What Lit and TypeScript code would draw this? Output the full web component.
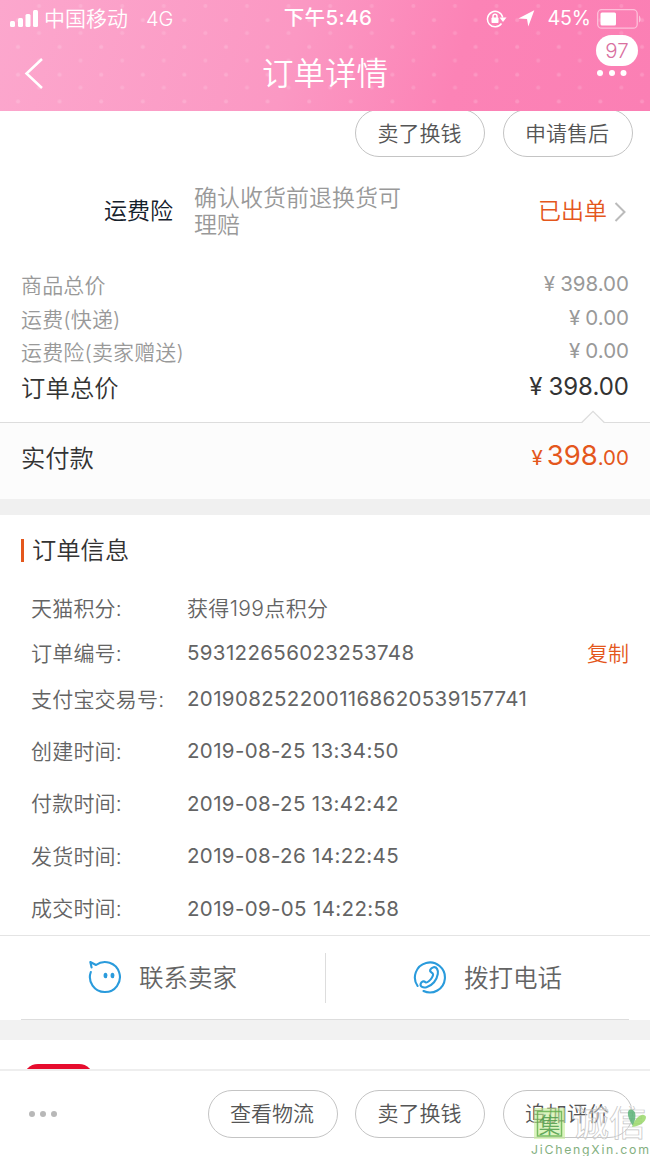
import { LitElement, html, css } from "lit";
import { customElement } from "lit/decorators.js";

const fees = [
  ["商品总价", "398.00"],
  ["运费(快递)", "0.00"],
  ["运费险(卖家赠送)", "0.00"],
];

const info = [
  ["天猫积分:", "获得199点积分", "pts"],
  ["订单编号:", "593122656023253748", "num"],
  ["支付宝交易号:", "2019082522001168620539157741", "trade"],
  ["创建时间:", "2019-08-25 13:34:50", "date"],
  ["付款时间:", "2019-08-25 13:42:42", "date"],
  ["发货时间:", "2019-08-26 14:22:45", "date"],
  ["成交时间:", "2019-09-05 14:22:58", "date"],
];

@customElement("app-root")
export class AppRoot extends LitElement {
  static styles = css`
    :host {
      display: flex;
      flex-direction: column;
      position: relative;
      width: 650px;
      height: 1156px;
      overflow: hidden;
      background: #fff;
      color: #646464;
      font-family: Inter, "Noto Sans CJK SC", sans-serif;
      font-weight: 350;
      font-size: 21px;
      line-height: 1;
      white-space: nowrap;
    }
    * { box-sizing: border-box; }
    svg { display: block; flex: none; }
    .head {
      position: relative;
      flex: none;
      height: 111px;
      color: #fff;
      background: linear-gradient(105deg, #fca7cd 0%, #fb98c3 45%, #fc83b6 70%, #fb7fb4 100%);
    }
    .pattern { position: absolute; inset: 0; }
    .status {
      position: relative;
      display: grid;
      grid-template-columns: 1fr auto 1fr;
      align-items: center;
      height: 37px;
      padding: 0 8px 0 10px;
      font-size: 20px;
    }
    .carrier, .power { display: flex; align-items: center; }
    .power { justify-content: flex-end; }
    .name { margin-left: 6px; font-size: 21px; }
    .net { margin-left: 18px; font-size: 20px; }
    .pct { font-size: 19.5px; font-weight: 400; }
    .time { margin-left: 4px; font-size: 20.5px; font-weight: 500; letter-spacing: 0.4px; }
    .arrow { margin: 0 12px 0 11px; }
    .batt { margin-left: 6px; }
    .nav {
      position: relative;
      display: grid;
      grid-template-columns: 60px 1fr 60px;
      align-items: center;
      height: 73px;
    }
    .back { margin-left: 24px; }
    .title { text-align: center; font-size: 31.5px; }
    .more { position: relative; height: 73px; }
    .more-dots { position: absolute; left: 6px; top: 32px; }
    .badge {
      position: absolute;
      left: 6px;
      top: -2px;
      width: 42px;
      height: 31px;
      border-radius: 16px;
      background: #fff;
      color: #d9709f;
      text-align: center;
      line-height: 31px;
      font-size: 20.5px;
    }
    .clip {
      flex: none;
      height: 46px;
      overflow: hidden;
      display: flex;
      justify-content: flex-end;
      align-items: flex-end;
      gap: 17.5px;
      padding-right: 17.5px;
    }
    .pill {
      flex: none;
      display: flex;
      align-items: center;
      justify-content: center;
      width: 130px;
      height: 48px;
      padding-right: 1px;
      border: 1px solid #c4c4c4;
      border-radius: 24px;
      color: #555;
      font-size: 21px;
    }
    .insure {
      flex: none;
      display: flex;
      align-items: center;
      height: 109px;
      padding: 0 24px 0 104px;
      font-size: 23px;
    }
    .ins-name { width: 90px; color: #14202b; }
    .ins-text { width: 215px; color: #999; line-height: 27px; white-space: normal; }
    .ins-state { margin-left: auto; color: #e4571c; }
    .chev { margin-left: 7px; }
    .fees { flex: none; display: flex; flex-direction: column; height: 156px; padding: 3px 21px 0; }
    .fee { display: flex; justify-content: space-between; align-items: center; height: 33.5px; color: #999; }
    .fee > span:first-child { letter-spacing: 0.15px; }
    .total { height: 38px; color: #333; font-size: 24.3px; }
    .amt { position: relative; top: -1.500px; display: flex; align-items: baseline; gap: 5px; font-size: 20.5px; font-weight: 400; }
    .total .amt { font-size: 24px; gap: 6px; }
    .paid {
      position: relative;
      flex: none;
      display: flex;
      justify-content: space-between;
      align-items: center;
      height: 77px;
      padding: 0 21px 6px;
      border-top: 1px solid #ddd;
      background: #fcfcfc;
      color: #333;
      font-size: 24.3px;
    }
    .notch { position: absolute; left: 581px; top: -13px; }
    .paid .amt { color: #e4571c; gap: 4px; top: -2px; }
    .big { font-size: 27.5px; }
    .gap { flex: none; height: 16px; background: #f0f0f0; }
    .info { flex: none; display: grid; grid-template-rows: 70px 46px 45px 49px repeat(4, 52.5px); height: 420px; }
    .info-title { display: flex; align-items: center; padding-left: 21px; color: #333; font-size: 24.3px; }
    .bar { width: 3px; height: 23px; margin-right: 8px; background: #e4571c; }
    .row { display: grid; grid-template-columns: 156px 1fr auto; align-items: center; padding: 0 21px 0 31px; }
    .row > span:first-child { letter-spacing: 0.2px; }
    .linked { padding-bottom: 3px; }
    .row .val { font-size: 20.5px; font-weight: 400; letter-spacing: 0.35px; }
    .row .pts { font-size: 21px; font-weight: 350; }
    .copy { color: #e4571c; font-size: 21px; }
    .contact {
      flex: none;
      display: grid;
      grid-template-columns: 325px 1px 1fr;
      align-items: center;
      height: 84px;
      border-top: 1px solid #e4e4e4;
      font-size: 24.5px;
    }
    .call { display: flex; align-items: center; gap: 17px; padding: 1px 0 0 88px; }
    .vline + .call { padding-left: 87px; }
    .call svg { position: relative; top: -1px; }
    .vline { height: 50px; background: #ddd; }
    .base { flex: none; height: 1px; margin: 0 21px; background: #ddd; }
    .strip { flex: none; height: 20px; background: #f2f2f2; }
    .peek { flex: none; height: 29px; overflow: hidden; padding: 24px 0 0 23px; }
    .red { width: 71px; height: 30px; border-radius: 17px; background: #e60c2d; }
    .foot {
      flex: none;
      display: flex;
      align-items: center;
      gap: 17.5px;
      height: 87px;
      padding: 0 17.5px 0 28px;
      border-top: 2px solid #eee;
    }
    .foot-dots { margin-right: auto; }
    .mark { position: absolute; left: 530px; top: 1106px; width: 120px; height: 50px; }
    .mark-url { font-size: 12.3px; font-weight: 400; }
    .mark-zh { font-family: "Noto Sans CJK SC", sans-serif; }
  `;

  render() {
    return html`
      <header class="head">
        <svg class="pattern" width="650" height="111">
          <defs>
            <pattern id="p" width="41.6" height="54.6" patternUnits="userSpaceOnUse">
              <circle cx="18" cy="20" r="2" fill="#fff" opacity=".16" />
              <circle cx="39" cy="6" r="2" fill="#fff" opacity=".13" />
              <circle cx="39" cy="33" r="2" fill="#fff" opacity=".13" />
              <circle cx="18" cy="47" r="2" fill="#fff" opacity=".16" />
            </pattern>
          </defs>
          <rect width="650" height="111" fill="url(#p)" />
        </svg>
        <div class="status">
          <div class="carrier">
            <svg width="28" height="18" fill="#fff">
              <rect x="0" y="11" width="5" height="6" rx="1.5" />
              <rect x="8" y="8" width="5" height="9" rx="1.5" />
              <rect x="15.5" y="4" width="5" height="13" rx="1.5" />
              <rect x="23" y="0" width="5" height="17" rx="1.5" />
            </svg>
            <span class="name">中国移动</span><span class="net">4G</span>
          </div>
          <span class="time">下午5:46</span>
          <div class="power">
            <svg width="21" height="18" viewBox="0 0 21 18" fill="none" stroke="#fff" stroke-width="1.5">
              <path d="M15.5 13.5A7.7 7.7 0 1 1 16.7 7.5" />
              <path d="M13.5 7.5h7l-3.5 4.5z" fill="#fff" stroke="none" />
              <rect x="5.5" y="7.5" width="7" height="5.5" rx=".8" fill="#fff" stroke="none" />
              <path d="M7 8V6.2a2 2 0 0 1 4 0V8" />
            </svg>
            <svg class="arrow" width="17" height="17" viewBox="0 0 17 17"><path d="M16.3 0.3L10.3 16.5L9 9L0.3 8.5Z" fill="#fff" /></svg>
            <span class="pct">45%</span>
            <svg class="batt" width="45" height="20" viewBox="0 0 45 20">
              <rect x=".7" y=".7" width="39.5" height="18.5" rx="4" fill="none" stroke="#fff" stroke-opacity=".5" stroke-width="1.3" />
              <rect x="3.5" y="3.5" width="15.5" height="13" rx="1.5" fill="#fff" />
              <path d="M42 6.5c2 1 2 6 0 7z" fill="#fff" fill-opacity=".5" />
            </svg>
          </div>
        </div>
        <div class="nav">
          <svg class="back" width="20" height="32" viewBox="0 0 20 32" fill="none" stroke="#fff" stroke-width="2.5"><path d="M18 1L2.5 15.5L18 30" /></svg>
          <span class="title">订单详情</span>
          <div class="more">
            <span class="badge">97</span>
            <svg class="more-dots" width="32" height="8" fill="#fff"><circle cx="4" cy="4" r="3" /><circle cx="16" cy="4" r="3" /><circle cx="27.5" cy="4" r="3" /></svg>
          </div>
        </div>
      </header>

      <div class="clip"><span class="pill">卖了换钱</span><span class="pill">申请售后</span></div>

      <div class="insure">
        <span class="ins-name">运费险</span>
        <span class="ins-text">确认收货前退换货可理赔</span>
        <span class="ins-state">已出单</span>
        <svg class="chev" width="12" height="20" viewBox="0 0 12 20" fill="none" stroke="#bbb" stroke-width="2"><path d="M1.5 1L10.5 10L1.5 19" /></svg>
      </div>

      <div class="fees">
        ${fees.map(([k, v]) => html`<div class="fee"><span>${k}</span><span class="amt"><span>¥</span><span>${v}</span></span></div>`)}
        <div class="fee total"><span>订单总价</span><span class="amt"><span>¥</span><span>398.00</span></span></div>
      </div>
      <div class="paid">
        <svg class="notch" width="25" height="14" viewBox="0 0 25 14"><path d="M0.5 13L12 1.5L23.5 13V14H.5Z" fill="#fcfcfc" /><path d="M.5 12.8L12 1.3L23.5 12.8" fill="none" stroke="#ddd" stroke-width="1.3" /></svg>
        <span>实付款</span>
        <span class="amt"><span>¥</span><span><span class="big">398</span>.00</span></span>
      </div>
      <div class="gap"></div>

      <section class="info">
        <div class="info-title"><span class="bar"></span>订单信息</div>
        ${info.map(([k, v, c]) => html`<div class="row ${c === "trade" ? "linked" : ""}"><span>${k}</span><span class="val ${c}">${v}</span>${c === "num" ? html`<span class="copy">复制</span>` : ""}</div>`)}
      </section>

      <div class="contact">
        <div class="call">
          <svg width="34" height="34" viewBox="0 0 34 34" fill="none" stroke="#2a9bdc" stroke-width="2.1" stroke-linecap="round" stroke-linejoin="round">
            <path d="M2.8 12A15 15 0 1 0 8 5L2.300 2L3.600 7.500" />
            <ellipse cx="17.500" cy="15.500" rx="1.900" ry="2.800" fill="#2a9bdc" stroke="none" />
            <ellipse cx="24.500" cy="15.500" rx="1.900" ry="2.800" fill="#2a9bdc" stroke="none" />
          </svg>
          <span>联系卖家</span>
        </div>
        <span class="vline"></span>
        <div class="call">
          <svg width="34" height="34" viewBox="0 0 34 34" fill="none" stroke="#2a9bdc" stroke-width="2.1" stroke-linecap="round" stroke-linejoin="round">
            <path d="M4.6 26A15 15 0 1 1 10.5 31L13 31.7" />
            <path d="M20.5 7.2C23.5 6.5 25.5 10 24.8 14C23.8 20 19.5 25.5 13.5 27.2C10 28.2 7 26.5 7.6 24C8.2 21.5 10.8 20.5 12.5 22.2C14 23.5 17.5 20 19 17.5C20.5 15 20.5 13.5 18.5 12.5C16 11.3 17.2 8 20.5 7.2Z" />
          </svg>
          <span>拨打电话</span>
        </div>
      </div>
      <div class="base"></div>
      <div class="strip"></div>
      <div class="peek"><div class="red"></div></div>
      <footer class="foot">
        <svg class="foot-dots" width="30" height="8" fill="#b8b8b8"><circle cx="4" cy="4" r="3" /><circle cx="15" cy="4" r="3" /><circle cx="26" cy="4" r="3" /></svg>
        <span class="pill">查看物流</span><span class="pill">卖了换钱</span><span class="pill">追加评价</span>
      </footer>

      <svg class="mark" viewBox="0 0 120 50">
        <rect x="4" y="2" width="31" height="31" fill="#c4ec96" opacity=".6" />
        <rect x="7.5" y="5.5" width="24" height="24.5" fill="none" stroke="#5fae4a" stroke-width="1.5" opacity=".8" />
        <text class="mark-zh" x="8.5" y="26.5" font-size="22" font-weight="350" fill="#4f9c4a" opacity=".85">集</text>
        <text class="mark-zh" x="42" y="29.5" font-size="37" font-weight="500" fill="#fff" fill-opacity=".4" stroke="#c4c4c4" stroke-width=".7">诚信</text>
        <path d="M103 20C96 10 97 3 101 3.5C106 4 107 10 103 20Z" fill="#5cb377" opacity=".85" />
        <path d="M102 21C107 7 115 7 116 11C116 16 110 20 102 21Z" fill="#9ad86a" opacity=".85" />
        <text class="mark-url" x="1" y="48" textLength="118" fill="#84b080">JiChengXin.com</text>
      </svg>
    `;
  }
}
